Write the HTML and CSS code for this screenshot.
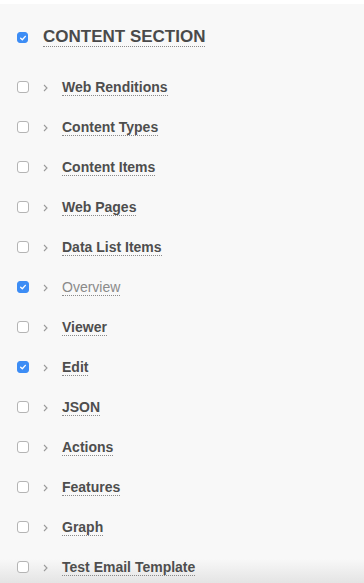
FILE: index.html
```html
<!DOCTYPE html>
<html lang="en">
<head>
    <meta charset="UTF-8">
    <meta name="viewport" content="width=device-width, initial-scale=1.0">
    <title>Content Section</title>
    <link rel="stylesheet" href="styles.css">
</head>
<body>
    <div class="panel">
        <div class="section-head">
            <span class="box checked"><svg viewBox="0 0 12 12"><path d="M3.2 6.2 L5.2 8.1 L8.8 4" /></svg></span>
            <span class="section-title">CONTENT SECTION</span>
        </div>
        <ul class="tree">
            <li class="row"><span class="box"></span><svg class="chev" viewBox="0 0 5 8"><path d="M1 1 L4 4 L1 7" /></svg><span class="label">Web Renditions</span></li>
            <li class="row"><span class="box"></span><svg class="chev" viewBox="0 0 5 8"><path d="M1 1 L4 4 L1 7" /></svg><span class="label">Content Types</span></li>
            <li class="row"><span class="box"></span><svg class="chev" viewBox="0 0 5 8"><path d="M1 1 L4 4 L1 7" /></svg><span class="label">Content Items</span></li>
            <li class="row"><span class="box"></span><svg class="chev" viewBox="0 0 5 8"><path d="M1 1 L4 4 L1 7" /></svg><span class="label">Web Pages</span></li>
            <li class="row"><span class="box"></span><svg class="chev" viewBox="0 0 5 8"><path d="M1 1 L4 4 L1 7" /></svg><span class="label">Data List Items</span></li>
            <li class="row"><span class="box checked"><svg viewBox="0 0 12 12"><path d="M3.2 6.2 L5.2 8.1 L8.8 4" /></svg></span><svg class="chev" viewBox="0 0 5 8"><path d="M1 1 L4 4 L1 7" /></svg><span class="label light">Overview</span></li>
            <li class="row"><span class="box"></span><svg class="chev" viewBox="0 0 5 8"><path d="M1 1 L4 4 L1 7" /></svg><span class="label">Viewer</span></li>
            <li class="row"><span class="box checked"><svg viewBox="0 0 12 12"><path d="M3.2 6.2 L5.2 8.1 L8.8 4" /></svg></span><svg class="chev" viewBox="0 0 5 8"><path d="M1 1 L4 4 L1 7" /></svg><span class="label">Edit</span></li>
            <li class="row"><span class="box"></span><svg class="chev" viewBox="0 0 5 8"><path d="M1 1 L4 4 L1 7" /></svg><span class="label">JSON</span></li>
            <li class="row"><span class="box"></span><svg class="chev" viewBox="0 0 5 8"><path d="M1 1 L4 4 L1 7" /></svg><span class="label">Actions</span></li>
            <li class="row"><span class="box"></span><svg class="chev" viewBox="0 0 5 8"><path d="M1 1 L4 4 L1 7" /></svg><span class="label">Features</span></li>
            <li class="row"><span class="box"></span><svg class="chev" viewBox="0 0 5 8"><path d="M1 1 L4 4 L1 7" /></svg><span class="label">Graph</span></li>
            <li class="row"><span class="box"></span><svg class="chev" viewBox="0 0 5 8"><path d="M1 1 L4 4 L1 7" /></svg><span class="label">Test Email Template</span></li>
        </ul>
    </div>
</body>
</html>
```
FILE: styles.css
```css
html {
    height: 100%;
    background: linear-gradient(to bottom, #ffffff 0, #ffffff 4px, #f8f8f8 4px, #f8f8f8 calc(100% - 24px), #e4e4e4 100%) no-repeat;
}

body {
    margin: 0;
    font-family: "Liberation Sans", Arial, Helvetica, sans-serif;
    color: #4e4e4e;
}

.panel {
    padding-top: 4px;
}

.section-head {
    display: flex;
    align-items: center;
    height: 60px;
    padding-top: 3px;
    padding-left: 17px;
}

.section-title {
    margin-left: 15px;
    font-size: 17px;
    font-weight: bold;
    line-height: 17px;
    padding-bottom: 1px;
    border-bottom: 1px dotted #8a8a8a;
    color: #4a4a4a;
}

.tree {
    list-style: none;
    margin: 0;
    padding: 0;
}

.row {
    display: flex;
    align-items: center;
    height: 40px;
    padding-left: 17px;
}

/* checkbox */
.box {
    display: inline-block;
    box-sizing: border-box;
    width: 12px;
    height: 12px;
    border: 1px solid #b4b4b4;
    border-radius: 3px;
    background: #fff;
    flex-shrink: 0;
}

.box.checked {
    border-color: #3d8df5;
    background: #3d8df5;
}

.box svg {
    display: block;
    width: 10px;
    height: 10px;
    fill: none;
    stroke: #fff;
    stroke-width: 1.6;
    stroke-linecap: round;
    stroke-linejoin: round;
}

.section-head .box {
    width: 11px;
    height: 11px;
}

.chev {
    margin-left: 14px;
    width: 5px;
    height: 8px;
    margin-top: 1px;
    fill: none;
    stroke: #9a9a9a;
    stroke-width: 1.1;
}

.label {
    margin-left: 14px;
    margin-top: 2px;
    font-size: 14px;
    font-weight: bold;
    line-height: 14px;
    padding-bottom: 1px;
    border-bottom: 1px dotted #8a8a8a;
}

.label.light {
    font-weight: normal;
    color: #8a8a8a;
}
```
